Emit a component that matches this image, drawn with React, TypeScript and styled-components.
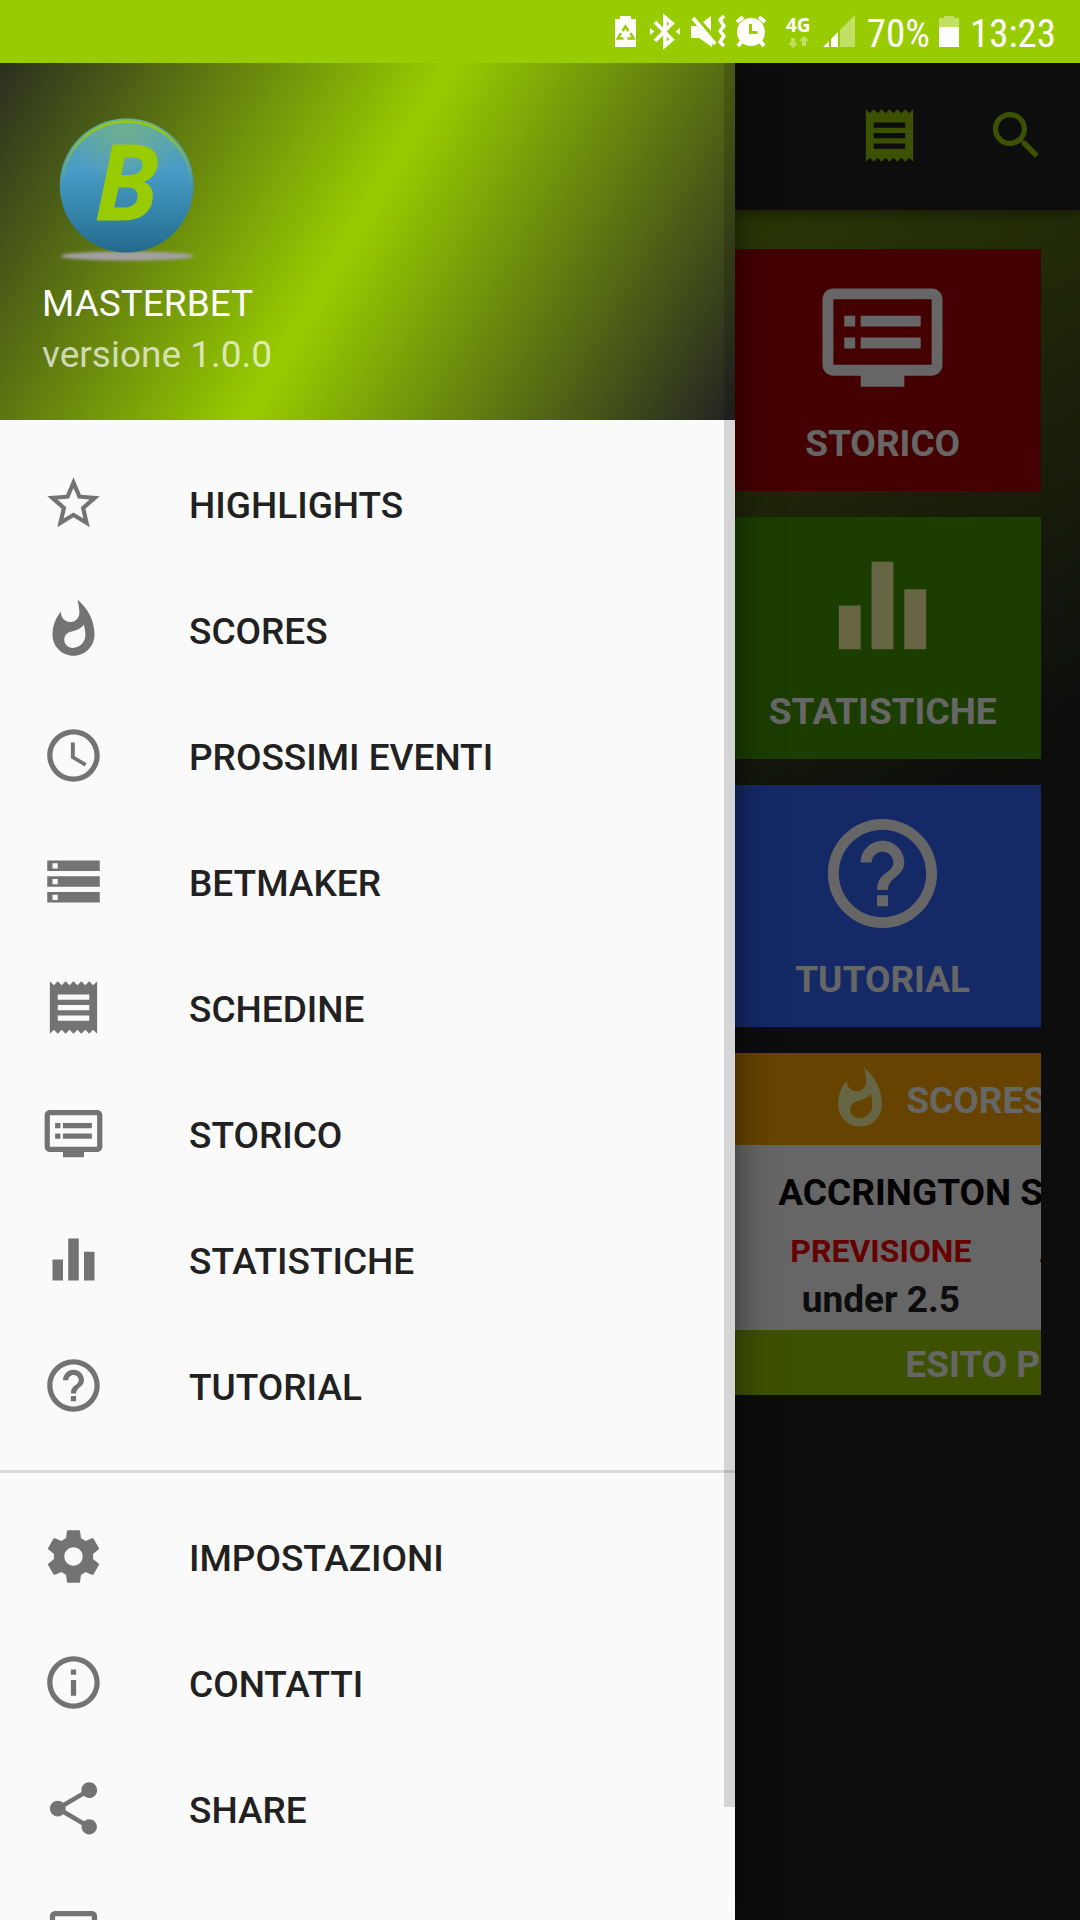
import React from 'react';
import styled, { createGlobalStyle } from 'styled-components';

const GlobalStyle = createGlobalStyle`
  *, *::before, *::after { box-sizing: border-box; }
  body {
    margin: 0;
    background: #222222;
    font-family: Roboto, "Noto Sans", sans-serif;
  }
  button, a { font: inherit; color: inherit; }
`;

/* ---------- icons ---------- */

const PATHS = {
  star:
    'M22 9.24l-7.19-.62L12 2 9.19 8.63 2 9.24l5.46 4.73L5.82 21 12 17.27 18.18 21l-1.63-7.03L22 9.24zM12 15.4l-3.76 2.27 1-4.28-3.32-2.88 4.38-.38L12 6.1l1.71 4.04 4.38.38-3.32 2.88 1 4.28L12 15.4z',
  fire:
    'M13.5.67s.74 2.65.74 4.8c0 2.06-1.35 3.73-3.41 3.73-2.07 0-3.63-1.67-3.63-3.73l.03-.36C5.21 7.51 4 10.62 4 14c0 4.42 3.58 8 8 8s8-3.58 8-8C20 8.61 17.41 3.8 13.5.67zM11.71 19c-1.78 0-3.22-1.4-3.22-3.14 0-1.62 1.05-2.76 2.81-3.12 1.77-.36 3.6-1.21 4.62-2.58.39 1.29.59 2.65.59 4.04 0 2.65-2.15 4.8-4.8 4.8z',
  clock:
    'M11.99 2C6.47 2 2 6.48 2 12s4.47 10 9.99 10C17.52 22 22 17.52 22 12S17.52 2 11.99 2zM12 20c-4.42 0-8-3.58-8-8s3.58-8 8-8 8 3.58 8 8-3.58 8-8 8zm.5-13H11v6l5.25 3.15.75-1.23-4.5-2.67z',
  storage:
    'M2 20h20v-4H2v4zm2-3h2v2H4v-2zM2 4v4h20V4H2zm4 3H4V5h2v2zm-4 7h20v-4H2v4zm2-3h2v2H4v-2z',
  receipt:
    'M18 17H6v-2h12v2zm0-4H6v-2h12v2zm0-4H6V7h12v2zM3 22l1.5-1.5L6 22l1.5-1.5L9 22l1.5-1.5L12 22l1.5-1.5L15 22l1.5-1.5L18 22l1.5-1.5L21 22V2l-1.5 1.5L18 2l-1.5 1.5L15 2l-1.5 1.5L12 2l-1.5 1.5L9 2 7.5 3.5 6 2 4.5 3.5 3 2v20z',
  dvr:
    'M21 3H3c-1.1 0-2 .9-2 2v12c0 1.1.9 2 2 2h5v2h8v-2h5c1.1 0 1.99-.9 1.99-2L23 5c0-1.1-.9-2-2-2zm0 14H3V5h18v12zm-2-9H8v2h11V8zm0 4H8v2h11v-2zM7 8H5v2h2V8zm0 4H5v2h2v-2z',
  bars: 'M10 20h4V4h-4v16zm-6 0h4v-8H4v8zM16 9v11h4V9h-4z',
  help:
    'M11 18h2v-2h-2v2zm1-16C6.48 2 2 6.48 2 12s4.48 10 10 10 10-4.48 10-10S17.52 2 12 2zm0 18c-4.41 0-8-3.59-8-8s3.59-8 8-8 8 3.59 8 8-3.59 8-8 8zm0-14c-2.21 0-4 1.79-4 4h2c0-1.1.9-2 2-2s2 .9 2 2c0 2-3 1.75-3 5h2c0-2.25 3-2.5 3-5 0-2.21-1.79-4-4-4z',
  settings:
    'M19.43 12.98c.04-.32.07-.64.07-.98s-.03-.66-.07-.98l2.11-1.65c.19-.15.24-.42.12-.64l-2-3.46c-.12-.22-.39-.3-.61-.22l-2.49 1c-.52-.4-1.08-.73-1.69-.98l-.38-2.65C14.46 2.18 14.25 2 14 2h-4c-.25 0-.46.18-.49.42l-.38 2.65c-.61.25-1.17.59-1.69.98l-2.49-1c-.23-.09-.49 0-.61.22l-2 3.46c-.13.22-.07.49.12.64l2.11 1.65c-.04.32-.07.65-.07.98s.03.66.07.98l-2.11 1.65c-.19.15-.24.42-.12.64l2 3.46c.12.22.39.3.61.22l2.49-1c.52.4 1.08.73 1.69.98l.38 2.65c.03.24.24.42.49.42h4c.25 0 .46-.18.49-.42l.38-2.65c.61-.25 1.17-.59 1.69-.98l2.49 1c.23.09.49 0 .61-.22l2-3.46c.12-.22.07-.49-.12-.64l-2.11-1.65zM12 15.5c-1.93 0-3.5-1.57-3.5-3.5s1.57-3.5 3.5-3.5 3.5 1.57 3.5 3.5-1.57 3.5-3.5 3.5z',
  info:
    'M11 17h2v-6h-2v6zm1-15C6.48 2 2 6.48 2 12s4.48 10 10 10 10-4.48 10-10S17.52 2 12 2zm0 18c-4.41 0-8-3.59-8-8s3.59-8 8-8 8 3.59 8 8-3.59 8-8 8zM11 9h2V7h-2v2z',
  share:
    'M18 16.08c-.76 0-1.44.3-1.96.77L8.91 12.7c.05-.23.09-.46.09-.7s-.04-.47-.09-.7l7.05-4.11c.54.5 1.25.81 2.04.81 1.66 0 3-1.34 3-3s-1.34-3-3-3-3 1.34-3 3c0 .24.04.47.09.7L8.04 9.81C7.5 9.31 6.79 9 6 9c-1.66 0-3 1.34-3 3s1.34 3 3 3c.79 0 1.5-.31 2.04-.81l7.12 4.16c-.05.21-.08.43-.08.65 0 1.61 1.31 2.92 2.92 2.92 1.61 0 2.92-1.31 2.92-2.92s-1.31-2.92-2.92-2.92z',
  frame:
    'M19 3H5c-1.11 0-2 .9-2 2v14c0 1.1.89 2 2 2h14c1.1 0 2-.9 2-2V5c0-1.1-.9-2-2-2zm0 16H5V5h14v14z',
  search:
    'M15.5 14h-.79l-.28-.27C15.41 12.59 16 11.11 16 9.5 16 5.91 13.09 3 9.5 3S3 5.91 3 9.5 5.91 16 9.5 16c1.61 0 3.09-.59 4.23-1.57l.27.28v.79l5 4.99L20.49 19l-4.99-5zm-6 0C7.01 14 5 11.99 5 9.5S7.01 5 9.5 5 14 7.01 14 9.5 11.99 14 9.5 14z',
};

type IconName = keyof typeof PATHS;

const IconSvg = styled.svg<{ $size: number; $color: string }>`
  display: block;
  flex: none;
  width: ${(p) => p.$size}px;
  height: ${(p) => p.$size}px;
  fill: ${(p) => p.$color};
`;

function Icon({ name, size, color }: { name: IconName; size: number; color: string }) {
  return (
    <IconSvg viewBox="0 0 24 24" $size={size} $color={color} aria-hidden="true">
      <path d={PATHS[name]} fillRule="evenodd" />
    </IconSvg>
  );
}

/* ---------- status bar ---------- */

const Screen = styled.div`
  display: flex;
  flex-direction: column;
  height: 100vh;
  overflow: hidden;
`;

const StatusBar = styled.header`
  display: flex;
  align-items: center;
  justify-content: flex-end;
  flex: none;
  height: 63px;
  padding-right: 24px;
  background: #99cc00;
  color: #ffffff;
  font-family: "Roboto Condensed", "Liberation Sans Narrow", Roboto, sans-serif;
  font-size: 39px;
  line-height: 46px;
`;

const StatusText = styled.span`
  padding-top: 4px;
`;

const StatusIcons = styled.svg`
  display: block;
  width: 252px;
  height: 63px;
  margin-right: 5px;
`;

const BatteryIcon = styled.svg`
  display: block;
  width: 22px;
  height: 63px;
  margin: 0 10px 0 8px;
`;

const NetworkLabel = styled.text`
  font: 700 19px "Noto Sans", sans-serif;
  fill: #ffffff;
`;

function StatusGlyphs() {
  return (
    <StatusIcons viewBox="610 0 252 63" aria-hidden="true">
      <path fill="#fff" d="M620 16h11v3h5v28h-21V19h5z" />
      <g fill="none" stroke="#9c0" strokeWidth="2.600">
        <path d="M622.500 31l3-4.500 3 4.500M621 33l-3 5.500h5.500M630.500 33l3 5.500h-6" />
      </g>
      <path
        d="M655 22l17 17.500-7 6V17.500l7 6L655 41"
        fill="none"
        stroke="#fff"
        strokeWidth="3.800"
      />
      <path fill="#fff" d="M650 28l4.500 3.500-4.500 3.500zM680 28l-4.500 3.500 4.500 3.500z" />
      <path fill="#fff" d="M691 26h6l15 15v6l-13-9h-8zM703 22l8-6v15z" />
      <path d="M693 18l22 26" stroke="#fff" strokeWidth="4" />
      <path
        d="M724 16l-4 4 4 6-4 5 4 5-4 6 4 4"
        fill="none"
        stroke="#fff"
        strokeWidth="3.600"
        strokeLinejoin="round"
      />
      <circle cx="751" cy="32" r="14" fill="#fff" />
      <path d="M737 22l6-5M765 22l-6-5M742 41l-4 5M760 41l4 5" stroke="#fff" strokeWidth="4" />
      <path d="M750.500 24v8.500h7" fill="none" stroke="#9c0" strokeWidth="3" />
      <NetworkLabel x="786" y="32">4G</NetworkLabel>
      <path
        d="M791 38h4v5h3l-5 5-5-5h3zM802 46h4v-5h3l-5-5-5 5h3z"
        fill="#fff"
        opacity=".4"
      />
      <path d="M823 47l6-6v6zM831 39l7-7v15h-7z" fill="#fff" />
      <path d="M840 30l15-15v32h-15z" fill="#fff" opacity=".4" />
    </StatusIcons>
  );
}

/* ---------- page behind the drawer ---------- */

const Body = styled.div`
  position: relative;
  display: flex;
  flex-direction: column;
  flex: 1;
  min-height: 0;
  overflow: hidden;
`;

const Toolbar = styled.div`
  position: relative;
  display: flex;
  align-items: center;
  justify-content: flex-end;
  flex: none;
  height: 147px;
  padding-bottom: 2px;
  background: #222222;
  box-shadow: 0 4px 12px rgba(0, 0, 0, 0.4);
`;

const ToolbarButton = styled.button`
  display: grid;
  place-items: center;
  width: 127px;
  height: 126px;
  padding: 0;
  border: 0;
  background: none;
`;

const Dashboard = styled.main`
  display: grid;
  grid-template-columns: repeat(3, minmax(0, 1fr));
  align-content: start;
  gap: 26px;
  flex: 1;
  padding: 39px;
  background: linear-gradient(148deg, #99cc00 0%, #222222 50%, #222222 100%);
`;

const Tile = styled.button<{ $bg: string }>`
  display: flex;
  flex-direction: column;
  align-items: center;
  gap: 19px;
  grid-column: 3;
  padding: 23px 0 25px;
  border: 0;
  background: ${(p) => p.$bg};
  color: #ffffff;
  font-size: 37px;
  font-weight: 700;
  line-height: 44px;
`;

const ScoreCard = styled.section`
  grid-column: 3;
  overflow: hidden;
  background: #ffffff;
  color: #222222;
  font-size: 37px;
  font-weight: 700;
  line-height: 44px;
  white-space: nowrap;
`;

const ScoreHeading = styled.h2`
  display: flex;
  align-items: center;
  gap: 13px;
  height: 92px;
  margin: 0;
  padding-left: 103px;
  background: #ffaa00;
  color: #ffffff;
  font: inherit;
`;

const ScoreHeadingText = styled.span`
  padding-top: 3px;
`;

const Match = styled.div`
  padding: 26px 0 8px 54px;
`;

const MatchTitle = styled.h3`
  margin: 0 0 14px;
  color: #000000;
  font: inherit;
`;

const Forecasts = styled.dl`
  display: flex;
  gap: 68px;
  margin: 0 0 0 12px;
`;

const ForecastLabel = styled.dt`
  margin-bottom: 5px;
  color: #ff0000;
  font-size: 32px;
  line-height: 44px;
`;

const ForecastValue = styled.dd`
  margin: 0;
  text-align: center;
`;

const Outcome = styled.div`
  height: 65px;
  padding: 13px 0 8px 181px;
  background: #99cc00;
  color: #ffffff;
`;

/* ---------- drawer ---------- */

const Scrim = styled.div`
  position: absolute;
  inset: 0;
  background: rgba(0, 0, 0, 0.6);
`;

const Drawer = styled.nav`
  position: absolute;
  inset: 0 auto 0 0;
  width: 100%;
  max-width: 735px;
  overflow: hidden;
  background: #fafafa;
  box-shadow: 0 0 36px rgba(0, 0, 0, 0.5);
`;

const DrawerScrollbar = styled.div`
  position: absolute;
  top: 0;
  right: 0;
  width: 11px;
  height: 93.9%;
  background: rgba(0, 0, 0, 0.145);
`;

const DrawerHeader = styled.div`
  height: 357px;
  padding: 47px 42px 0;
  background: linear-gradient(120deg, #222222 0%, #99cc00 50%, #222222 100%) 0 100% / 100% calc(100% + 63px);
  color: #ffffff;
  font-size: 37px;
  line-height: 44px;
`;

const Logo = styled.svg`
  display: block;
  width: 168px;
  height: 168px;
`;

const LogoLetter = styled.text`
  font: italic 600 102px "Open Sans", "Noto Sans", sans-serif;
  fill: #99cc00;
  stroke: #99cc00;
  stroke-width: 3px;
`;

const AppName = styled.div`
  margin-top: 4px;
`;

const AppVersion = styled.div`
  margin-top: 7px;
  color: rgba(255, 255, 255, 0.7);
`;

const MenuGroup = styled.ul`
  margin: 0;
  padding: 21px 0;
  list-style: none;

  & + & {
    border-top: 3px solid #dadada;
  }
`;

const MenuLink = styled.a`
  display: flex;
  align-items: center;
  gap: 84px;
  height: 126px;
  padding: 0 42px 2px;
  color: #212121;
  font-size: 37px;
  font-weight: 500;
  line-height: 44px;
  text-decoration: none;
`;

const MenuLabel = styled.span`
  padding-top: 6px;
`;

const MAIN_MENU: { icon: IconName; label: string }[] = [
  { icon: 'star', label: 'HIGHLIGHTS' },
  { icon: 'fire', label: 'SCORES' },
  { icon: 'clock', label: 'PROSSIMI EVENTI' },
  { icon: 'storage', label: 'BETMAKER' },
  { icon: 'receipt', label: 'SCHEDINE' },
  { icon: 'dvr', label: 'STORICO' },
  { icon: 'bars', label: 'STATISTICHE' },
  { icon: 'help', label: 'TUTORIAL' },
];

const EXTRA_MENU: { icon: IconName; label: string }[] = [
  { icon: 'settings', label: 'IMPOSTAZIONI' },
  { icon: 'info', label: 'CONTATTI' },
  { icon: 'share', label: 'SHARE' },
  { icon: 'frame', label: '' },
];

function Menu({ items }: { items: { icon: IconName; label: string }[] }) {
  return (
    <MenuGroup>
      {items.map((item) => (
        <li key={item.icon}>
          <MenuLink href="#">
            <Icon name={item.icon} size={63} color="#737373" />
            <MenuLabel>{item.label}</MenuLabel>
          </MenuLink>
        </li>
      ))}
    </MenuGroup>
  );
}

function MasterbetLogo() {
  return (
    <Logo viewBox="42 110 168 168" aria-hidden="true">
      <defs>
        <linearGradient id="ball" x1="0" y1="0" x2="0" y2="1">
          <stop offset="0" stopColor="#5fa9a8" />
          <stop offset=".38" stopColor="#4a9bc6" />
          <stop offset=".7" stopColor="#3585ab" />
          <stop offset="1" stopColor="#236a8c" />
        </linearGradient>
        <radialGradient id="shine" cx=".5" cy=".12" r=".4">
          <stop offset="0" stopColor="#7cb57c" stopOpacity=".6" />
          <stop offset="1" stopColor="#7cb57c" stopOpacity="0" />
        </radialGradient>
        <linearGradient id="rim" x1="0" y1="0" x2="0" y2="1">
          <stop offset="0" stopColor="#99cc00" />
          <stop offset=".5" stopColor="#99cc00" stopOpacity="0" />
        </linearGradient>
        <filter id="soft" x="-10%" y="-50%" width="120%" height="200%">
          <feGaussianBlur stdDeviation="1.4" />
        </filter>
      </defs>
      <ellipse cx="127.500" cy="256" rx="67" ry="4.500" fill="#a3a0a3" filter="url(#soft)" />
      <circle cx="126.700" cy="185.500" r="67" fill="url(#ball)" />
      <circle cx="126.700" cy="185.500" r="67" fill="url(#shine)" />
      <circle cx="126.700" cy="186" r="64.500" fill="none" stroke="url(#rim)" strokeWidth="2.400" />
      <LogoLetter x="95" y="219">B</LogoLetter>
    </Logo>
  );
}

export default function App() {
  return (
    <Screen>
      <GlobalStyle />
      <StatusBar>
        <StatusGlyphs />
        <StatusText>70%</StatusText>
        <BatteryIcon viewBox="938 0 22 63" aria-hidden="true">
          <path d="M944 16h10v2h5v9h-20v-9h5z" fill="#fff" opacity=".4" />
          <path d="M939 27h20v20h-20z" fill="#fff" />
        </BatteryIcon>
        <StatusText as="time">13:23</StatusText>
      </StatusBar>

      <Body>
        <Toolbar>
          <ToolbarButton aria-label="Schedine">
            <Icon name="receipt" size={63} color="#99cc00" />
          </ToolbarButton>
          <ToolbarButton aria-label="Cerca">
            <Icon name="search" size={63} color="#99cc00" />
          </ToolbarButton>
        </Toolbar>

        <Dashboard>
          <Tile $bg="#aa0000">
            <Icon name="dvr" size={131} color="#ffffff" />
            STORICO
          </Tile>
          <Tile $bg="#449900">
            <Icon name="bars" size={131} color="#ffffaa" />
            STATISTICHE
          </Tile>
          <Tile $bg="#3366ff">
            <Icon name="help" size={131} color="#ffffff" />
            TUTORIAL
          </Tile>
          <ScoreCard>
            <ScoreHeading>
              <Icon name="fire" size={66} color="#ffffaa" />
              <ScoreHeadingText>SCORES</ScoreHeadingText>
            </ScoreHeading>
            <Match>
              <MatchTitle>ACCRINGTON S</MatchTitle>
              <Forecasts>
                <div>
                  <ForecastLabel>PREVISIONE</ForecastLabel>
                  <ForecastValue>under 2.5</ForecastValue>
                </div>
                <div>
                  <ForecastLabel>A</ForecastLabel>
                </div>
              </Forecasts>
            </Match>
            <Outcome>ESITO P</Outcome>
          </ScoreCard>
        </Dashboard>

        <Scrim />

        <Drawer>
          <DrawerHeader>
            <MasterbetLogo />
            <AppName>MASTERBET</AppName>
            <AppVersion>versione 1.0.0</AppVersion>
          </DrawerHeader>
          <Menu items={MAIN_MENU} />
          <Menu items={EXTRA_MENU} />
          <DrawerScrollbar />
        </Drawer>
      </Body>
    </Screen>
  );
}
